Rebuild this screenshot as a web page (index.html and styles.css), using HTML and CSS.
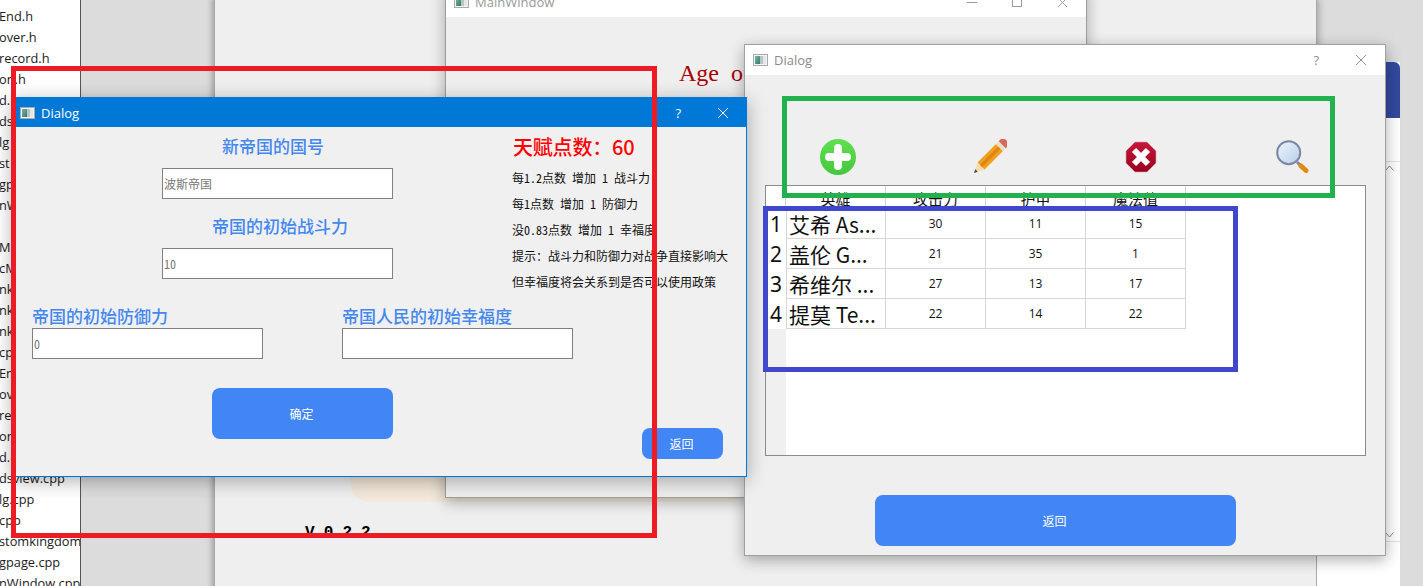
FILE: index.html
```html
<!DOCTYPE html>
<html lang="zh">
<head>
<meta charset="utf-8">
<title>Dialog</title>
<link rel="stylesheet" href="styles.css">
</head>
<body>
<svg class="defs" width="0" height="0" aria-hidden="true">
  <defs>
    <linearGradient id="qt" x1="0" y1="0" x2="1" y2="1"><stop offset="0" stop-color="#7fb0b0"/><stop offset="1" stop-color="#2f7d5f"/></linearGradient>
    <linearGradient id="plus" x1="0" y1="0" x2="0" y2="1"><stop offset="0" stop-color="#5fe04f"/><stop offset="1" stop-color="#45c83f"/></linearGradient>
    <linearGradient id="stop" x1="0" y1="0" x2="0" y2="1"><stop offset="0" stop-color="#c8173c"/><stop offset="1" stop-color="#96021f"/></linearGradient>
    <linearGradient id="lens" x1="0" y1="0" x2="1" y2="1"><stop offset="0" stop-color="#eef4fb"/><stop offset="1" stop-color="#b6cfe9"/></linearGradient>
    <symbol id="appicon" viewBox="0 0 15 12">
      <rect x=".5" y=".5" width="14" height="11" fill="#f4f4f4" stroke="#a9a9a9"/>
      <rect x="2" y="2" width="5" height="8" fill="url(#qt)"/>
      <rect x="7" y="2" width="3" height="8" fill="#b9c4c6"/>
      <rect x="10" y="2" width="3" height="8" fill="#e4e6e6"/>
    </symbol>
    <symbol id="closex" viewBox="0 0 12 12">
      <path d="M1 1 11 11M11 1 1 11" fill="none" stroke="currentColor" stroke-width="1"/>
    </symbol>
  </defs>
</svg>

<main class="desktop">
  <nav class="files">
    <div class="file">End.h</div>
    <div class="file">over.h</div>
    <div class="file">record.h</div>
    <div class="file">on.h</div>
    <div class="file">d.h</div>
    <div class="file">ds</div>
    <div class="file">lg</div>
    <div class="file">st</div>
    <div class="file">gp</div>
    <div class="file">nW</div>
    <div class="file">&nbsp;</div>
    <div class="file">Mo</div>
    <div class="file">cM</div>
    <div class="file">nk</div>
    <div class="file">nk</div>
    <div class="file">nk</div>
    <div class="file">cp</div>
    <div class="file">En</div>
    <div class="file">ov</div>
    <div class="file">re</div>
    <div class="file">on</div>
    <div class="file">d.c</div>
    <div class="file">dsview.cpp</div>
    <div class="file">lg.cpp</div>
    <div class="file">cpp</div>
    <div class="file">stomkingdom</div>
    <div class="file">gpage.cpp</div>
    <div class="file">nWindow.cpp</div>
  </nav>

  <section class="app-window">
    <div class="peach"></div>
    <div class="version">V 0.2.2</div>
  </section>

  <aside class="side-panel">
    <div class="side-head"></div>
    <div class="side-rule"></div>
    <svg class="chevron" width="9" height="6" viewBox="0 0 9 6"><path d="M.5 5.5 4.5 1 8.5 5.5" fill="none" stroke="#888"/></svg>
    <div class="side-fill"></div>
    <svg class="chevron" width="9" height="6" viewBox="0 0 9 6"><path d="M.5.5 4.5 5 8.5.5" fill="none" stroke="#888"/></svg>
    <div class="side-rule side-rule-low"></div>
  </aside>

  <section class="main-window">
    <header class="main-title">
      <svg class="app-icon" width="15" height="12"><use href="#appicon"/></svg>
      <span class="main-name">MainWindow</span>
      <span class="win-min"></span>
      <span class="win-max"></span>
      <svg class="win-close" width="11" height="11"><use href="#closex"/></svg>
    </header>
    <div class="main-body">Age of</div>
  </section>

  <section class="dialog dialog-table">
    <header class="titlebar titlebar-light">
      <svg class="app-icon" width="15" height="12"><use href="#appicon"/></svg>
      <span class="title-text">Dialog</span>
      <span class="help">?</span>
      <svg class="close" width="12" height="12"><use href="#closex"/></svg>
    </header>
    <div class="table-body">
      <div class="toolbar">
        <svg class="tool" width="36" height="36" viewBox="0 0 36 36">
          <circle cx="18" cy="18" r="18" fill="url(#plus)"/>
          <path d="M18 9V27M9 18H27" stroke="#fff" stroke-width="8" stroke-linecap="round"/>
        </svg>
        <svg class="tool" width="36" height="36" viewBox="0 0 36 36">
          <g transform="translate(3 34) rotate(-45)">
            <path d="M0 0 10-5V5Z" fill="#f3dcae"/>
            <path d="M0 0 3.5-1.7V1.7Z" fill="#444"/>
            <rect x="10" y="-5" width="26" height="10" fill="#f0a020"/>
            <rect x="10" y="-1.7" width="26" height="3.4" fill="#e2860f"/>
            <rect x="36" y="-5" width="4" height="10" fill="#e6e2cc"/>
            <path d="M40-5H43Q46-5 46 0T43 5H40Z" fill="#d9685c"/>
          </g>
        </svg>
        <svg class="tool" width="36" height="36" viewBox="-1 0 36 36">
          <path d="M12 3H24L33 12V24L24 33H12L3 24V12Z" fill="url(#stop)" stroke="#d9a0ac" stroke-width=".6"/>
          <path d="M11 11 25 25M25 11 11 25" stroke="#fff" stroke-width="6"/>
        </svg>
        <svg class="tool" width="36" height="36" viewBox="0 0 36 36">
          <path d="M24 23 28 27" stroke="#808a9c" stroke-width="3"/>
          <path d="M28 27 33 31.5" stroke="#e08a10" stroke-width="5" stroke-linecap="round"/>
          <circle cx="15.7" cy="13.7" r="11.5" fill="url(#lens)" stroke="#7b88a3" stroke-width="2"/>
        </svg>
      </div>
      <div class="table-wrap">
        <table class="heroes">
          <thead>
            <tr><th class="corner"></th><th>英雄</th><th>攻击力</th><th>护甲</th><th>魔法值</th></tr>
          </thead>
          <tbody>
            <tr><th class="rownum">1</th><td class="name">艾希 As...</td><td>30</td><td>11</td><td>15</td></tr>
            <tr><th class="rownum">2</th><td class="name">盖伦 G...</td><td>21</td><td>35</td><td>1</td></tr>
            <tr><th class="rownum">3</th><td class="name">希维尔 ...</td><td>27</td><td>13</td><td>17</td></tr>
            <tr><th class="rownum">4</th><td class="name">提莫 Te...</td><td>22</td><td>14</td><td>22</td></tr>
          </tbody>
        </table>
      </div>
      <button class="btn btn-wide" type="button">返回</button>
    </div>
  </section>

  <section class="dialog dialog-form">
    <header class="titlebar titlebar-active">
      <svg class="app-icon" width="15" height="12"><use href="#appicon"/></svg>
      <span class="title-text">Dialog</span>
      <span class="help">?</span>
      <svg class="close" width="12" height="12"><use href="#closex"/></svg>
    </header>
    <div class="form-body">
      <div class="form">
        <label class="field-label label-name">新帝国的国号</label>
        <input class="field field-center" placeholder="波斯帝国">
        <label class="field-label label-power">帝国的初始战斗力</label>
        <input class="field field-center" placeholder="10">
        <div class="pair">
          <div class="pair-item">
            <label class="field-label">帝国的初始防御力</label>
            <input class="field" placeholder="0">
          </div>
          <div class="pair-item">
            <label class="field-label">帝国人民的初始幸福度</label>
            <input class="field">
          </div>
        </div>
        <button class="btn btn-ok" type="button">确定</button>
      </div>
      <div class="notes">
        <div class="points">天赋点数：60</div>
        <p class="note">每1.2点数 增加 1 战斗力</p>
        <p class="note">每1点数 增加 1 防御力</p>
        <p class="note">没0.83点数 增加 1 幸福度</p>
        <p class="note">提示：战斗力和防御力对战争直接影响大</p>
        <p class="note">但幸福度将会关系到是否可以使用政策</p>
        <button class="btn btn-back" type="button">返回</button>
      </div>
    </div>
  </section>

  <div class="mark mark-red"></div>
  <div class="mark mark-green"></div>
  <div class="mark mark-blue"></div>
</main>
</body>
</html>
```
FILE: styles.css
```css
* { box-sizing: border-box; }
html, body { margin: 0; padding: 0; }
body { font-family: "Noto Sans CJK SC", "Noto Sans", sans-serif; overflow: hidden; }
.defs { position: absolute; }

.desktop { position: relative; width: 1423px; height: 586px; background: #dcdcdc; overflow: hidden; }

/* file tree on the far left */
.files { position: absolute; left: 0; top: 0; width: 81px; height: 586px; background: #fff; border-right: 1px solid #555; overflow: hidden; padding-top: 6px; }
.file { height: 21px; font: 12.8px/21px "Open Sans", sans-serif; color: #1a1a1a; white-space: nowrap; margin-left: -1px; }

/* big window behind everything */
.app-window { position: absolute; left: 214px; top: -2px; width: 1103px; height: 600px; background: #efefef; border: 1px solid #a8a8a8; box-shadow: -2px 0 6px rgba(0,0,0,.22), 2px 0 8px rgba(0,0,0,.2); }
.peach { position: absolute; left: 135px; top: 300px; width: 396px; height: 203px; background: #f4e9da; border-radius: 20px; }
.version { margin: 526px 0 0 90px; font: bold 16px/16px "Liberation Mono", monospace; letter-spacing: -.25px; color: #000; }

.side-panel { position: absolute; left: 1317px; top: 62px; width: 83px; height: 524px; background: #fff; display: flex; flex-direction: column; align-items: flex-end; }
.side-head { width: 100%; height: 56px; background: #324a9e; border-top-right-radius: 6px; flex: none; }
.side-rule { width: 100%; height: 1px; background: #e2e2e2; margin-top: 43px; flex: none; }
.side-rule-low { margin-top: 3px; }
.chevron { margin: 3px 6px 0 0; flex: none; }
.side-fill { flex: 1; max-height: 358px; min-height: 358px; }

/* middle window */
.main-window { position: absolute; left: 445px; top: -14px; width: 642px; height: 512px; background: #efefef; border: 1px solid #9c9c9c; box-shadow: 0 4px 14px rgba(0,0,0,.3); }
.main-title { height: 30px; background: #fff; display: flex; align-items: center; padding: 0 18px 0 8px; color: #999; }
.main-title .app-icon { flex: none; }
.main-name { margin-left: 6px; font: 13px "Open Sans", sans-serif; }
.win-min { margin-left: auto; width: 10px; height: 1px; background: #999; }
.win-max { margin-left: 35px; width: 10px; height: 10px; border: 1px solid #999; }
.win-close { margin-left: 35px; color: #999; }
.main-body { padding: 39px 0 0 233px; font: 24px/34px "Liberation Serif", serif; color: #a80000; word-spacing: 6px; }

/* dialogs */
.dialog { position: absolute; }
.dialog-table { left: 744px; top: 44px; width: 642px; height: 512px; background: #efefef; border: 1px solid #a0a0a0; box-shadow: 0 4px 14px rgba(0,0,0,.32); }
.dialog-form { left: 12px; top: 97px; width: 735px; height: 380px; background: #f0f0f0; border: 1px solid #0078d7; box-shadow: 0 4px 18px rgba(0,0,0,.32); }

.titlebar { display: flex; align-items: center; font: 13px "Open Sans", sans-serif; }
.titlebar .app-icon { flex: none; }
.title-text { margin-left: 6px; }
.help { margin-left: auto; font-size: 13px; }
.close { margin-left: 36px; flex: none; }
.titlebar-light { height: 30px; background: #fff; color: #8f8f8f; padding: 0 18px 0 8px; }
.titlebar-light .title-text { color: #8a8a8a; }
.titlebar-active { height: 29px; background: #0078d7; color: #fff; padding: 0 17px 0 7px; }

/* form dialog */
.form-body { display: flex; height: 349px; }
.form { width: 500px; padding: 9px 0 0 19px; display: flex; flex-direction: column; align-items: flex-start; flex: none; }
.field-label { display: block; height: 20px; font-size: 17px; line-height: 20px; color: #4488ee; font-weight: 500; white-space: nowrap; }
.label-name { margin-left: 190px; }
.label-power { margin: 17px 0 0 180px; }
.field { display: block; width: 231px; height: 31px; margin: 0; padding: 0 1px; background: #fff; border: 1px solid #808080; border-radius: 0; outline: none; font: 12px "Noto Sans CJK SC", sans-serif; font-feature-settings: "hwid"; }
.field::placeholder { color: #777; opacity: 1; }
.field-center { margin: 12px 0 0 130px; }
.pair { display: flex; gap: 79px; margin-top: 27px; }
.pair-item .field { margin-top: 2px; }
.btn { display: block; border: 0; padding: 0 2px 0 0; background: #4285f4; color: #fff; border-radius: 8px; font: 12px "Noto Sans CJK SC", sans-serif; }
.btn-ok { width: 181px; height: 51px; margin: 29px 0 0 180px; }
.btn-back { width: 81px; height: 31px; margin-top: auto; align-self: flex-end; }
.btn-wide { width: 361px; height: 51px; margin: 39px 0 0 130px; }

.notes { flex: none; width: 210px; padding: 10px 0 17px; display: flex; flex-direction: column; align-items: flex-start; height: 100%; }
.points { font-size: 20px; line-height: 20px; font-weight: 500; color: #f00; letter-spacing: -.2px; margin-bottom: 8px; white-space: nowrap; }
.note { margin: 0 0 0 -1px; font-size: 12px; line-height: 26px; color: #111; white-space: nowrap; font-feature-settings: "hwid"; }

/* table dialog */
.table-body { padding: 64px 0 0 0; }
.toolbar { display: flex; gap: 115px; padding-left: 75px; height: 46px; }
.tool { flex: none; }
.table-wrap { width: 601px; height: 271px; margin-left: 20px; border: 1px solid #8a8a90; background: linear-gradient(to right, #f0f0f0 20px, #fff 20px); overflow: hidden; }
.heroes { border-collapse: separate; border-spacing: 0; table-layout: fixed; width: 420px; background: #fff; }
.heroes th, .heroes td { padding: 0; border-right: 1px solid #d6d6d6; border-bottom: 1px solid #d6d6d6; font-weight: 400; text-align: center; overflow: hidden; white-space: nowrap; }
.heroes thead th { width: 100px; height: 23px; padding-top: 3px; font-size: 15px; line-height: 19px; color: #111; }
.heroes thead .corner { width: 20px; }
.heroes td { height: 30px; font: 12px/20px "Open Sans", sans-serif; color: #111; }
.heroes .rownum { height: 30px; border-right: 0; border-bottom: 0; font: 21px/28px "Noto Sans", sans-serif; color: #111; }
.heroes td.name { border-left: 1px solid #d6d6d6; text-align: left; padding-left: 2px; font: 21px/28px "Noto Sans CJK SC", sans-serif; color: #111; }
.heroes .name { width: 100px; }

/* annotation rectangles drawn over the screenshot */
.mark { position: absolute; border-style: solid; border-width: 5px; pointer-events: none; }
.mark-red { left: 11px; top: 66px; width: 646px; height: 472px; border-color: #ed1c24; }
.mark-green { left: 782px; top: 96px; width: 553px; height: 102px; border-color: #22b14c; }
.mark-blue { left: 763px; top: 206px; width: 475px; height: 166px; border-color: #3f48cc; }
```
